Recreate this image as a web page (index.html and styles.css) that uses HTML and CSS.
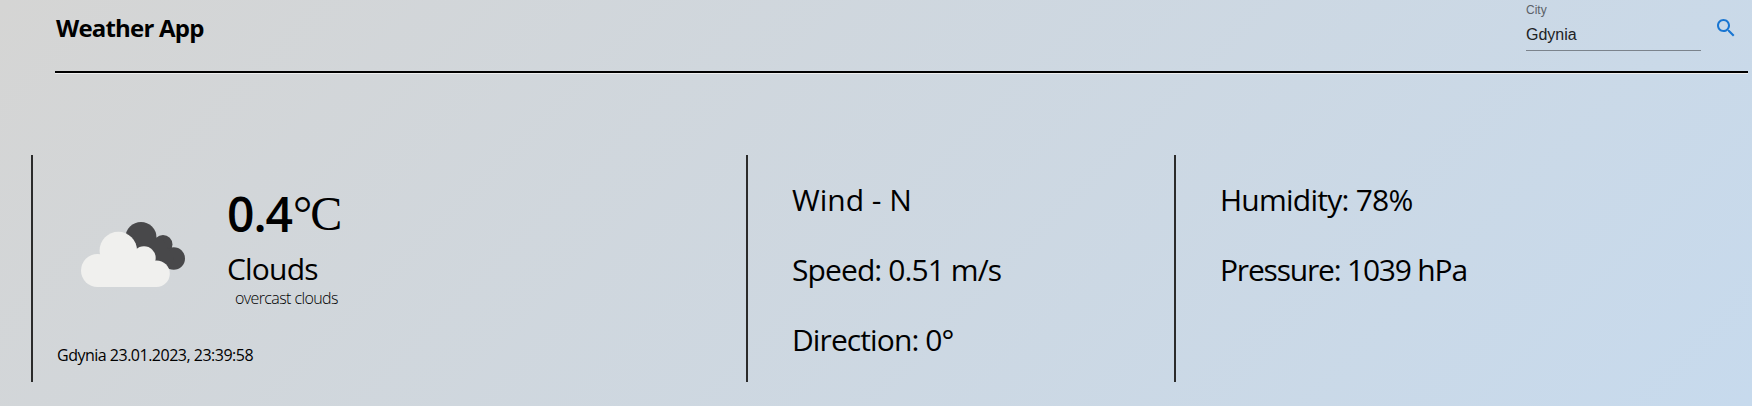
FILE: index.html
```html
<!DOCTYPE html>
<html lang="en">
<head>
<meta charset="utf-8">
<title>Weather App</title>
<link rel="stylesheet" href="styles.css">
</head>
<body>
<header class="header">
  <h1 class="title">Weather App</h1>
  <form class="search">
    <label class="field">
      <span class="field-label">City</span>
      <span class="field-value">Gdynia</span>
    </label>
    <svg class="search-icon" viewBox="0 0 24 24"><path d="M15.5 14h-.79l-.28-.27C15.41 12.59 16 11.11 16 9.5 16 5.91 13.09 3 9.5 3S3 5.91 3 9.5 5.91 16 9.5 16c1.61 0 3.09-.59 4.23-1.57l.27.28v.79l5 4.99L20.49 19l-4.99-5zm-6 0C7.01 14 5 11.99 5 9.5S7.01 5 9.5 5 14 7.01 14 9.5 11.99 14 9.5 14z"/></svg>
  </form>
</header>
<main class="weather">
  <section class="panel current">
    <div class="summary">
      <svg class="cloud" viewBox="0 0 130 100">
        <g class="cloud-dark">
          <circle cx="71" cy="37.500" r="15.500"/>
          <circle cx="93" cy="44.500" r="9.500"/>
          <circle cx="103.700" cy="58.500" r="11.300"/>
          <path d="M71 40L93 40L104 58L100 69L75 60Z"/>
        </g>
        <g class="cloud-light">
          <circle cx="27.500" cy="70.500" r="16.500"/>
          <circle cx="48.300" cy="50.500" r="18.700"/>
          <circle cx="74" cy="58" r="11.700"/>
          <circle cx="86.500" cy="73.700" r="13.300"/>
          <path d="M27 87V65L48 50L74 58L87 70V87Z"/>
        </g>
      </svg>
      <div class="reading">
        <div class="temp"><span class="temp-num">0.4</span><span class="temp-unit">°C</span></div>
        <div class="condition">Clouds</div>
        <div class="detail">overcast clouds</div>
      </div>
    </div>
    <div class="stamp">Gdynia 23.01.2023, 23:39:58</div>
  </section>
  <section class="panel stats">
    <p class="stat wind">Wind - N</p>
    <p class="stat speed">Speed: 0.51 m/s</p>
    <p class="stat direction">Direction: 0°</p>
  </section>
  <section class="panel stats">
    <p class="stat humidity">Humidity: 78%</p>
    <p class="stat pressure">Pressure: 1039 hPa</p>
  </section>
</main>
</body>
</html>
```
FILE: styles.css
```css
* { box-sizing: border-box; }
body {
  margin: 0;
  height: 406px;
  overflow: hidden;
  color: #000;
  font-family: "Open Sans", "Noto Sans", sans-serif;
  background: linear-gradient(135deg, #d5d5d4 0%, #c7daed 100%);
}
.header {
  display: flex;
  justify-content: space-between;
  height: 74px;
  margin: 0 4px 0 55px;
  border-bottom: 1px solid #eeeeee;
  box-shadow: inset 0 -2px 0 #000;
}
.title {
  margin: 11px 0 0 1px;
  font-size: 24px;
  font-weight: 700;
  line-height: 34px;
  letter-spacing: -0.8px;
}
.search { display: flex; margin-right: 10px; }
.field {
  width: 175px;
  height: 51px;
  border-bottom: 1px solid #7b838c;
  font-family: "Liberation Sans", Arial, sans-serif;
}
.field-label, .field-value { display: block; }
.field-label { padding-top: 2px; font-size: 12px; line-height: 16px; color: #5b6168; }
.field-value { padding-top: 5px; font-size: 16px; line-height: 23px; color: #202224; }
.search-icon { width: 24px; height: 24px; margin: 16px 0 0 13px; fill: #1976d2; }
.weather {
  display: grid;
  grid-template-columns: 715px 428px 1fr;
  margin: 81px 0 0 31px;
}
.panel { height: 227px; border-left: 2px solid #2b2b2b; }
.summary { display: flex; height: 162px; }
.cloud { width: 130px; height: 100px; margin: 45px 0 0 37px; }
.cloud-dark { fill: #48484a; }
.cloud-light { fill: #f0f0ee; }
.reading { margin: 26px 0 0 27px; white-space: nowrap; }
.temp { display: flex; height: 68px; line-height: 66px; font-size: 48px; }
.temp-num { width: 66px; font-weight: 600; letter-spacing: -1px; }
.temp-unit { font-family: "Liberation Serif", "Times New Roman", serif; letter-spacing: -2px; }
.condition { font-size: 30px; line-height: 40px; letter-spacing: -0.8px; }
.detail { padding-left: 8px; font-size: 16px; font-weight: 300; line-height: 18px; letter-spacing: -0.6px; }
.stamp { padding-left: 24px; font-size: 16px; line-height: 77px; letter-spacing: -0.5px; }
.stats { padding: 10px 0 0 44px; }
.stat { margin: 0; height: 70px; font-size: 30px; line-height: 70px; white-space: nowrap; }
.speed, .direction { letter-spacing: -0.9px; }
.humidity { letter-spacing: -0.75px; }
.pressure { letter-spacing: -1.2px; }
```
